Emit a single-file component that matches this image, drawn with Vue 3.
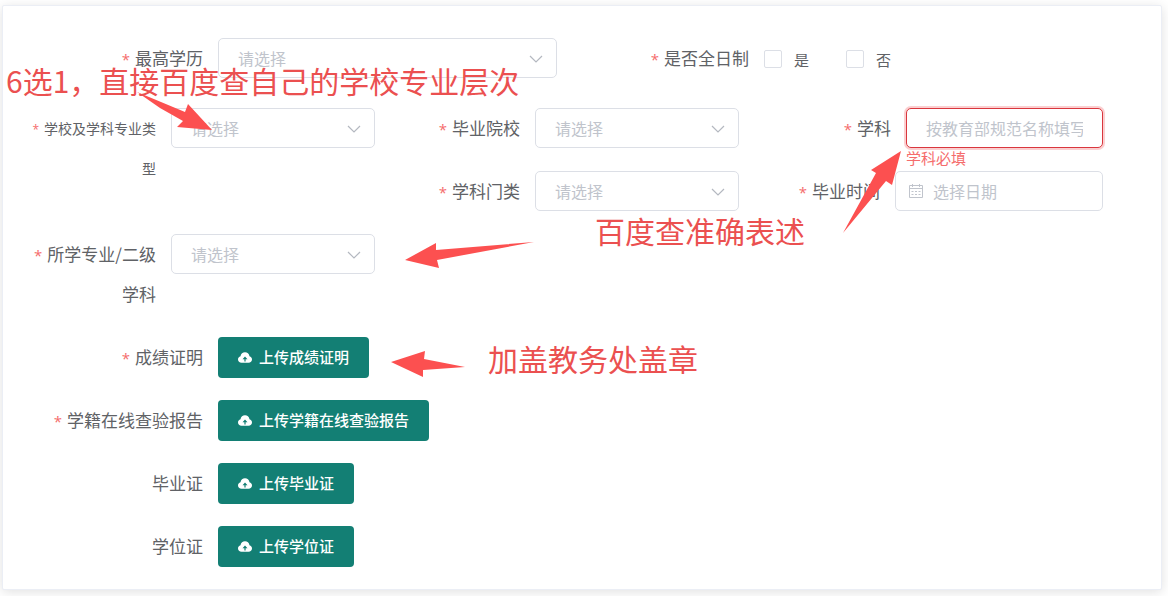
<script setup>
import { ref } from 'vue'

const degree = ref('')
const yes = ref(false)
const no = ref(false)
const schoolType = ref('')
const school = ref('')
const subject = ref('')
const category = ref('')
const gradDate = ref('')
const major = ref('')

const uploads = [
  { id: 'score', label: '成绩证明', required: true },
  { id: 'roll', label: '学籍在线查验报告', required: true },
  { id: 'diploma', label: '毕业证', required: false },
  { id: 'bachelor', label: '学位证', required: false },
]
</script>

<template>
  <main class="page">
    <form class="card" @submit.prevent>
      <div class="row halves">
        <div class="field">
          <label class="label wide required" for="degree">最高学历</label>
          <div class="control select">
            <select id="degree" v-model="degree"><option value="">请选择</option></select>
            <svg class="chevron" viewBox="0 0 14 8"><path d="M1 1l6 6 6-6" /></svg>
          </div>
        </div>
        <div class="field" role="group" aria-labelledby="fulltime">
          <span id="fulltime" class="label wide required">是否全日制</span>
          <div class="checks">
            <label class="check"><input v-model="yes" type="checkbox" />是</label>
            <label class="check"><input v-model="no" type="checkbox" />否</label>
          </div>
        </div>
      </div>

      <div class="row thirds">
        <div class="field tall">
          <label class="label required small" for="schoolType">学校及学科专业类型</label>
          <div class="control select">
            <select id="schoolType" v-model="schoolType"><option value="">请选择</option></select>
            <svg class="chevron" viewBox="0 0 14 8"><path d="M1 1l6 6 6-6" /></svg>
          </div>
        </div>
        <div class="field">
          <label class="label required" for="school">毕业院校</label>
          <div class="control select">
            <select id="school" v-model="school"><option value="">请选择</option></select>
            <svg class="chevron" viewBox="0 0 14 8"><path d="M1 1l6 6 6-6" /></svg>
          </div>
        </div>
        <div class="field">
          <label class="label required subject" for="subject">学科</label>
          <div class="control">
            <input id="subject" v-model="subject" class="invalid" type="text" placeholder="按教育部规范名称填写" aria-describedby="subject-error" />
            <div id="subject-error" class="error">学科必填</div>
          </div>
        </div>
        <div class="field">
          <label class="label required" for="category">学科门类</label>
          <div class="control select">
            <select id="category" v-model="category"><option value="">请选择</option></select>
            <svg class="chevron" viewBox="0 0 14 8"><path d="M1 1l6 6 6-6" /></svg>
          </div>
        </div>
        <div class="field">
          <label class="label required date-label" for="gradDate">毕业时间</label>
          <div class="control">
            <input id="gradDate" v-model="gradDate" class="date" type="text" placeholder="选择日期" />
            <svg class="calendar" viewBox="0 0 16 16">
              <path d="M1.500 2.500h13v12h-13zM1.500 5.500h13M4.500 1v3M11.500 1v3M3.500 8.500h2M7 8.500h2M10.500 8.500h2M3.500 11.500h2M7 11.500h2M10.500 11.500h2" />
            </svg>
          </div>
        </div>
      </div>

      <div class="row thirds">
        <div class="field">
          <label class="label required" for="major">所学专业/二级学科</label>
          <div class="control select">
            <select id="major" v-model="major"><option value="">请选择</option></select>
            <svg class="chevron" viewBox="0 0 14 8"><path d="M1 1l6 6 6-6" /></svg>
          </div>
        </div>
      </div>

      <div class="uploads">
        <div v-for="item in uploads" :key="item.id" class="field">
          <label class="label wide" :class="{ required: item.required }" :for="item.id">{{ item.label }}</label>
          <button :id="item.id" type="button" class="upload">
            <svg viewBox="0 0 14 11">
              <path class="cloud" d="M3.400 10.700C1.500 10.700 0 9.300 0 7.400c0-1.600 1-2.800 2.500-3.200C2.900 1.800 4.700.2 7 .2s4.100 1.600 4.500 4C13 4.600 14 5.800 14 7.400c0 1.900-1.500 3.300-3.400 3.300z" />
              <path class="up" d="M7 4.600L4.500 7.300h1.900v2.200h1.200V7.300h1.900z" />
            </svg>
            <span>上传{{ item.label }}</span>
          </button>
        </div>
      </div>
    </form>

    <div class="notes">
      <svg class="arrows" width="1168" height="596" viewBox="0 0 1168 596">
        <polygon points="137,92 185,112 188,104 212,130 177,127 183,121 160,108" />
        <polygon points="534,242 436,250 436,243 405,260 439,268 437,260" />
        <polygon points="465,367 424,359 425,351 391,362 423,377 423,370" />
        <polygon points="843,233 876,173 871,170 901,151 892,185 886,181" />
      </svg>
      <p class="note level">6选1，直接百度查自己的学校专业层次</p>
      <p class="note wording">百度查准确表述</p>
      <p class="note stamp">加盖教务处盖章</p>
    </div>
  </main>
</template>

<style>
body {
  margin: 0;
  background: #fff;
}
</style>

<style scoped>
* {
  box-sizing: border-box;
}
.page {
  position: relative;
  overflow: hidden;
  padding: 5px 6px 6px 2px;
  font-family: "Noto Sans CJK SC", sans-serif;
  color: #606266;
}
.card {
  padding: 32px 58px 22px 8px;
  background: #fff;
  border: 1px solid #ebeef5;
  border-radius: 2px;
  box-shadow: 0 2px 12px rgba(0, 0, 0, 0.12);
}
.row {
  display: grid;
}
.halves {
  grid-template-columns: repeat(2, 1fr);
  margin-bottom: 30px;
}
.thirds {
  grid-template-columns: repeat(3, 1fr);
  row-gap: 23px;
  margin-bottom: 23px;
}
.tall {
  grid-row: span 2;
}
.field {
  display: flex;
  align-items: flex-start;
  min-width: 0;
}
.label {
  flex: none;
  width: 160px;
  padding: 0 15px 0 12px;
  font-size: 17px;
  line-height: 40px;
  text-align: right;
}
.label.wide {
  width: 207px;
}
.label.small {
  font-size: 14px;
}
.label.subject {
  width: 167px;
}
.label.date-label {
  width: 156px;
}
.required::before {
  content: "*";
  margin-right: 5px;
  font-family: "Open Sans", sans-serif;
  font-size: 15px;
  line-height: 1;
  color: #f56c6c;
}
.small.required::before {
  font-size: 12px;
}
.control {
  position: relative;
  flex: 1;
  min-width: 0;
  height: 40px;
}
select,
input[type="text"] {
  display: block;
  width: 100%;
  height: 40px;
  padding: 0 19px;
  border: 1px solid #dcdfe6;
  border-radius: 5px;
  background: #fff;
  color: #c0c4cc;
  font: 16px "Noto Sans CJK SC", sans-serif;
  appearance: none;
  outline: none;
}
input::placeholder {
  color: #c0c4cc;
  opacity: 1;
}
input.date {
  padding: 0 37px;
}
input.invalid {
  border-color: #d9363e;
  box-shadow: 0 0 0 2px #fbcfd0;
}
.error {
  position: absolute;
  top: 100%;
  left: 0;
  font-size: 15px;
  line-height: 20px;
  color: #f56c6c;
}
.chevron {
  position: absolute;
  top: 17px;
  right: 14px;
  width: 14px;
  height: 8px;
  fill: none;
  stroke: #b4b8c0;
  stroke-width: 1.2;
  pointer-events: none;
}
.calendar {
  position: absolute;
  top: 12px;
  left: 13px;
  width: 16px;
  height: 16px;
  fill: none;
  stroke: #c0c4cc;
}
.checks {
  display: flex;
  gap: 37px;
  height: 40px;
}
.check {
  display: flex;
  align-items: center;
  gap: 12px;
  padding-top: 2px;
  font-size: 15px;
}
.check input {
  width: 18px;
  height: 18px;
  margin: 0;
  border: 1px solid #dcdfe6;
  border-radius: 2px;
  background: #fff;
  appearance: none;
}
.check input:checked {
  background: #137f74;
}
.uploads {
  display: flex;
  flex-direction: column;
  gap: 22px;
}
.upload {
  display: flex;
  align-items: center;
  gap: 7px;
  height: 41px;
  padding: 0 20px;
  border: 0;
  border-radius: 4px;
  background: #137f74;
  color: #fff;
  font: 500 15px "Noto Sans CJK SC", sans-serif;
}
.upload span {
  padding-bottom: 2px;
}
.upload svg {
  width: 14px;
  height: 11px;
}
.cloud {
  fill: #fff;
}
.up {
  fill: #137f74;
}
.notes {
  position: absolute;
  top: 0;
  left: 0;
  pointer-events: none;
}
.arrows {
  display: block;
  fill: #fc5050;
}
.note {
  position: absolute;
  margin: 0;
  font-size: 30px;
  line-height: 40px;
  color: #eb5050;
  white-space: nowrap;
}
.level {
  top: 60px;
  left: 6px;
}
.wording {
  top: 210px;
  left: 595px;
}
.stamp {
  top: 338px;
  left: 488px;
}
</style>
